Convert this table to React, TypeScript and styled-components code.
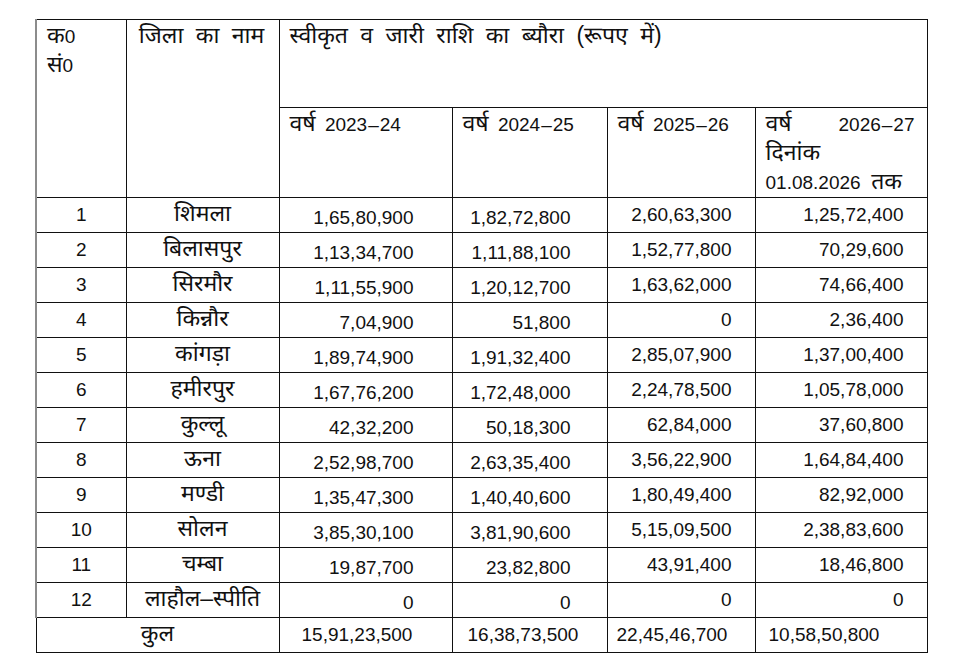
import React from "react";
import styled, { createGlobalStyle } from "styled-components";

const GlobalStyle = createGlobalStyle`
  html, body {
    margin: 0;
    padding: 0;
    background: #ffffff;
  }
  body {
    font-family: "Liberation Sans", "Noto Sans Devanagari", "Lohit Devanagari", "Noto Sans", sans-serif;
    color: #111111;
  }
`;

const Page = styled.div`
  padding: 19px 0 0 35px;
  width: 976px;
  height: 672px;
  box-sizing: border-box;
  overflow: hidden;
`;

const Table = styled.table`
  border-collapse: collapse;
  table-layout: fixed;
  font-size: 19px;
  line-height: 29px;
`;

const Col = styled.col<{ $w: number }>`
  width: ${(p) => p.$w}px;
`;

const HeadRow = styled.tr<{ $h: number }>`
  height: ${(p) => p.$h}px;
`;

const HeadCell = styled.th<{ $align?: string; $first?: boolean }>`
  border: 1px solid #111111;
  border-left: ${(p) => (p.$first ? "2px solid #8c8c8c" : "1px solid #111111")};
  vertical-align: top;
  text-align: ${(p) => p.$align || "left"};
  font-weight: normal;
  padding: 2px 12px 0 10px;
  white-space: nowrap;
  overflow: hidden;
`;

const Hi = styled.span<{ $gap?: number }>`
  font-size: 23px;
  line-height: 20px;
  word-spacing: 6px;
  margin-right: ${(p) => p.$gap ?? 0}px;
`;

const Dash = styled.span`
  margin: 0 1px;
`;

const SpreadLine = styled.div`
  display: flex;
  justify-content: space-between;
  align-items: baseline;
  height: 29px;
`;

const BodyRow = styled.tr`
  height: 35px;
`;

const Cell = styled.td<{ $align?: string; $padR?: number; $drop?: boolean; $first?: boolean }>`
  border: 1px solid #111111;
  border-left: ${(p) => (p.$first ? "2px solid #8c8c8c" : "1px solid #111111")};
  text-align: ${(p) => p.$align || "center"};
  vertical-align: middle;
  padding: ${(p) => (p.$drop ? "6px" : "0")} ${(p) => p.$padR ?? 0}px 0 0;
  white-space: nowrap;
  line-height: 24px;
`;

const TotalCell = styled.td<{ $padL?: number; $first?: boolean }>`
  border: 1px solid #111111;
  text-align: ${(p) => (p.$first ? "center" : "left")};
  vertical-align: middle;
  padding: 0 0 0 ${(p) => p.$padL ?? 0}px;
  white-space: nowrap;
  line-height: 24px;
`;

type Row = [string, string, string, string, string, string];

const rows: Row[] = [
  ["1", "शिमला", "1,65,80,900", "1,82,72,800", "2,60,63,300", "1,25,72,400"],
  ["2", "बिलासपुर", "1,13,34,700", "1,11,88,100", "1,52,77,800", "70,29,600"],
  ["3", "सिरमौर", "1,11,55,900", "1,20,12,700", "1,63,62,000", "74,66,400"],
  ["4", "किन्नौर", "7,04,900", "51,800", "0", "2,36,400"],
  ["5", "कांगड़ा", "1,89,74,900", "1,91,32,400", "2,85,07,900", "1,37,00,400"],
  ["6", "हमीरपुर", "1,67,76,200", "1,72,48,000", "2,24,78,500", "1,05,78,000"],
  ["7", "कुल्लू", "42,32,200", "50,18,300", "62,84,000", "37,60,800"],
  ["8", "ऊना", "2,52,98,700", "2,63,35,400", "3,56,22,900", "1,64,84,400"],
  ["9", "मण्डी", "1,35,47,300", "1,40,40,600", "1,80,49,400", "82,92,000"],
  ["10", "सोलन", "3,85,30,100", "3,81,90,600", "5,15,09,500", "2,38,83,600"],
  ["11", "चम्बा", "19,87,700", "23,82,800", "43,91,400", "18,46,800"],
  ["12", "लाहौल–स्पीति", "0", "0", "0", "0"],
];

const totals = ["15,91,23,500", "16,38,73,500", "22,45,46,700", "10,58,50,800"];
const valuePadR = [38, 36, 23, 23];
const valueDrop = [true, true, false, false];
const totalPadL = [22, 15, 9, 13];

function YearHead({ from, to }: { from: string; to: string }) {
  return (
    <>
      <Hi $gap={4}>वर्ष</Hi> {from}
      <Dash>–</Dash>
      {to}
    </>
  );
}

export default function App() {
  return (
    <>
      <GlobalStyle />
      <Page>
        <Table>
          <colgroup>
            <Col $w={90} />
            <Col $w={153} />
            <Col $w={173} />
            <Col $w={155} />
            <Col $w={148} />
            <Col $w={172} />
          </colgroup>
          <thead>
            <HeadRow $h={88}>
              <HeadCell rowSpan={2} $first>
                <Hi>क</Hi>0
                <br />
                <Hi>सं</Hi>0
              </HeadCell>
              <HeadCell rowSpan={2} $align="center">
                <Hi>जिला का नाम</Hi>
              </HeadCell>
              <HeadCell colSpan={4}>
                <Hi>स्वीकृत व जारी राशि का ब्यौरा (रूपए में)</Hi>
              </HeadCell>
            </HeadRow>
            <HeadRow $h={89}>
              <HeadCell>
                <YearHead from="2023" to="24" />
              </HeadCell>
              <HeadCell>
                <YearHead from="2024" to="25" />
              </HeadCell>
              <HeadCell>
                <YearHead from="2025" to="26" />
              </HeadCell>
              <HeadCell>
                <SpreadLine>
                  <Hi>वर्ष</Hi>
                  <span>
                    2026<Dash>–</Dash>27
                  </span>
                </SpreadLine>
                <Hi>दिनांक</Hi>
                <br />
                01.08.2026{"\u00a0 "}
                <Hi>तक</Hi>
              </HeadCell>
            </HeadRow>
          </thead>
          <tbody>
            {rows.map((r) => (
              <BodyRow key={r[0]}>
                <Cell $first>{r[0]}</Cell>
                <Cell>
                  <Hi>{r[1]}</Hi>
                </Cell>
                {r.slice(2).map((v, i) => (
                  <Cell key={i} $align="right" $padR={valuePadR[i]} $drop={valueDrop[i]}>
                    {v}
                  </Cell>
                ))}
              </BodyRow>
            ))}
            <BodyRow>
              <TotalCell colSpan={2} $first>
                <Hi>कुल</Hi>
              </TotalCell>
              {totals.map((t, i) => (
                <TotalCell key={i} $padL={totalPadL[i]}>
                  {t}
                </TotalCell>
              ))}
            </BodyRow>
          </tbody>
        </Table>
      </Page>
    </>
  );
}
